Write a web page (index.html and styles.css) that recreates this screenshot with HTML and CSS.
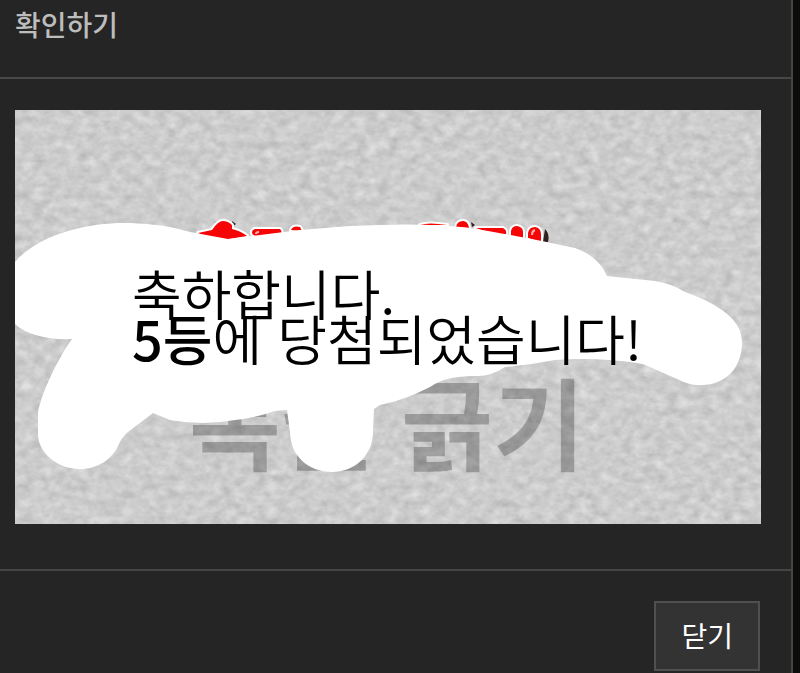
FILE: index.html
```html
<!DOCTYPE html>
<html lang="ko">
<head>
  <meta charset="UTF-8">
  <meta name="viewport" content="width=device-width, initial-scale=1">
  <title>확인하기</title>
  <link rel="stylesheet" href="styles.css">
</head>
<body>
  <section class="modal" role="dialog" aria-labelledby="modalTitle">
    <header class="modal-header">
      <h1 id="modalTitle">확인하기</h1>
    </header>

    <div class="modal-body">
      <div class="scratch">
        <svg class="scratch-cover" viewBox="15 110 746 414">
          <defs>
            <filter id="paper" x="0" y="0" width="100%" height="100%" color-interpolation-filters="sRGB">
              <feTurbulence type="fractalNoise" baseFrequency="0.09 0.12" numOctaves="3" seed="21"/>
              <feColorMatrix values="0.13 0.13 0 0 0.67  0.13 0.13 0 0 0.67  0.13 0.13 0 0 0.67  0 0 0 0 1"/>
            </filter>
          </defs>
          <rect x="15" y="110" width="746" height="414" filter="url(#paper)"/>
          <text class="cover-label" x="189" y="463">복권 긁기</text>

          <!-- top edge of the red title -->
          <g class="cover-title">
            <path class="title-shadow" d="M545 229q5 5 3 13h-5zM232 221l4 3-3 2zM471 222l4 3-3 2z"/>
            <path d="M198 233l14-3q6-9 11-9t9 4v4q9 2 15 7l-18 3h-18z"/>
            <path d="M255 229h25q3 3 0 5l-20 2q-8 1-8-4 0-2 3-3z"/>
            <path d="M291 230q2-5 9-3l2 4zM420 225q8-3 27 0zM456 227q1-6 7-6 5 0 6 7zM476 228h27q4 2 3 6l-7 2zM511 238v-7q1-5 6-5 6 1 6 6v7zM528 238v-5q1-6 7-6 6 1 6 7v8z"/>
            <path class="title-shine" d="M532 235q0-4 3-5M256 234q0-2 3-2"/>
          </g>

          <!-- scratched area -->
          <path class="scratched" d="M15 262C40 233 90 222 130 223Q165 224 190 232L228 239 260 235 300 230 350 226Q425 222 470 228Q520 236 575 248C594 255 602 265 607 276L655 281Q670 283 685 292Q708 300 722 310C736 320 742 330 742 343C742 368 725 385 702 385Q690 386 677 379L643 364Q600 357 555 360Q530 365 505 367Q490 377 475 376Q445 376 430 387Q405 400 380 405L374 409 373 432C373 455 355 472 332 472C308 472 290 455 290 432L287 410 275 411Q255 418 235 420 203 426 170 420L153 413 128 432Q121 438 118 446C112 459 98 469 80 469C58 469 38 453 38 434V412C42 392 57 360 72 339C49 340 26 335 15 324Z"/>
        </svg>
        <p class="result">축하합니다.<br><b>5등</b>에 당첨되었습니다!</p>
      </div>
    </div>

    <footer class="modal-footer">
      <button type="button" class="close-btn">닫기</button>
    </footer>
  </section>
</body>
</html>
```

FILE: styles.css
```css
* {
  box-sizing: border-box;
}
body {
  margin: 0;
  padding-right: 7px;
  background: #0d0c0b;
  font-family: 'Noto Sans CJK KR', sans-serif;
}
.modal {
  background: #252525;
  border-right: 2px solid #454545;
  border-bottom: 1px solid #454545;
}
.modal-header {
  padding: 4px 15px 33px;
  border-bottom: 2px solid #484848;
}
.modal-header h1 {
  margin: 0;
  color: #bdbdbd;
  font-size: 28px;
  font-weight: 500;
  line-height: 40px;
}
.modal-body {
  padding: 31px 30px 45px 15px;
}
.scratch {
  position: relative;
}
.scratch-cover {
  display: block;
  width: 100%;
}
.cover-label {
  fill: #000;
  fill-opacity: 0.25;
  font-size: 100px;
  font-weight: 700;
}
.cover-title {
  fill: #f50505;
  stroke: #fff;
  stroke-width: 4px;
  stroke-linejoin: round;
  paint-order: stroke;
}
.title-shadow {
  fill: #302020;
  stroke: none;
}
.title-shine {
  fill: none;
  stroke: #ffb0b0;
  stroke-width: 2px;
}
.scratched {
  fill: #fff;
}
.result {
  position: absolute;
  top: 160px;
  left: 117px;
  margin: 0;
  color: #000;
  font-size: 54px;
  font-weight: 350;
  line-height: 45px;
  white-space: nowrap;
}
.result b {
  font-weight: 500;
}
.modal-footer {
  display: flex;
  justify-content: flex-end;
  padding: 30px 31px 2px 15px;
  border-top: 2px solid #454545;
}
.close-btn {
  padding: 12px 25px 14px;
  border: 2px solid #505050;
  background: #333;
  color: #fff;
  font-family: inherit;
  font-size: 28px;
  line-height: 40px;
  cursor: pointer;
}
```
